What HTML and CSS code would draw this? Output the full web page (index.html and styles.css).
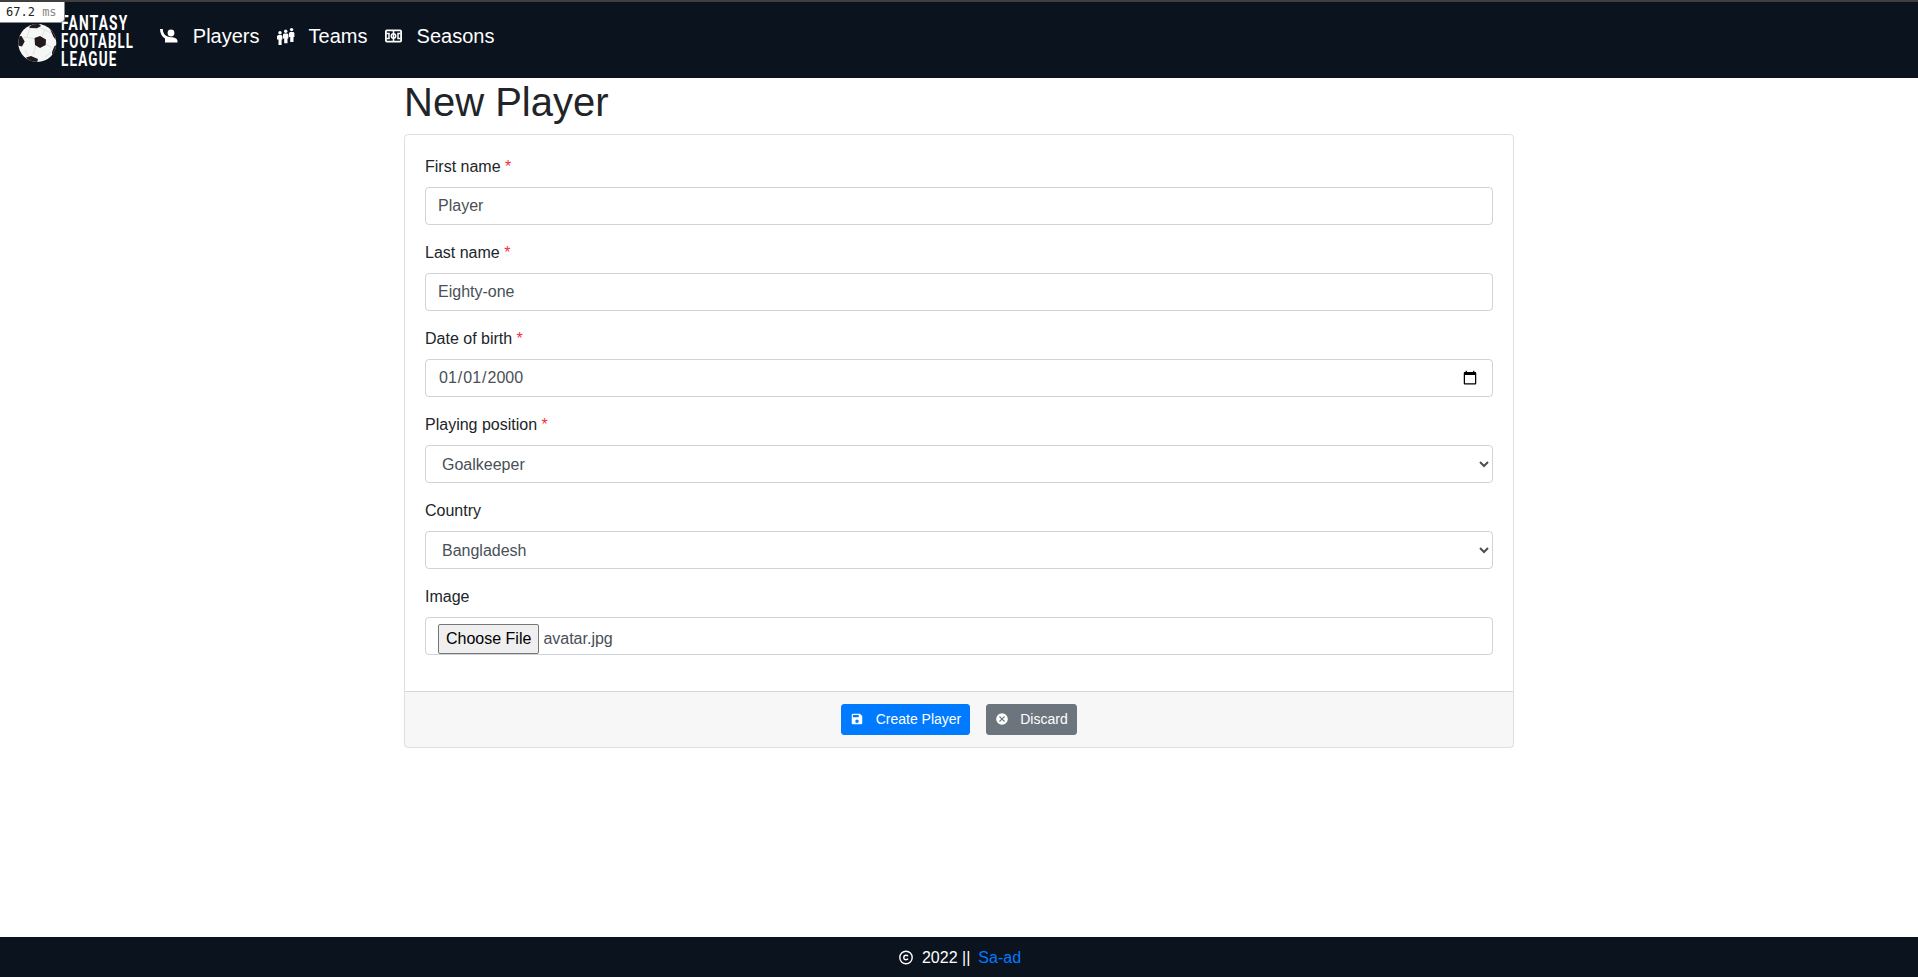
FILE: index.html
```html
<!DOCTYPE html>
<html lang="en-US">
<head>
<meta charset="utf-8">
<title>New Player</title>
<link rel="stylesheet" href="styles.css">
</head>
<body>
<div class="profiler">67.2 <span>ms</span></div>
<header class="navbar">
  <svg class="brand" width="120" height="60" viewBox="15 10 120 60">
    <defs><clipPath id="ball"><circle cx="37.3" cy="43" r="19"/></clipPath></defs>
    <circle cx="37.3" cy="43" r="19" fill="#f5f7f6"/>
    <g clip-path="url(#ball)">
      <g stroke="#dde0df" stroke-width="1" fill="none">
        <path d="M36 46l-3 9M46 44l6 4M42 36l3-6M34 39l-7-2M27 37l-4 1M27 37l3-9M45 30l-6-3M45 30l6 3M25 50l3 6M45 57l6-5"/>
      </g>
      <path fill="#211c1b" d="M34.500 38l5.500-2 6 3.500-.3 5.500-5.700 3-5-3zM29 27l4-3h6l2 2-4 2.300-7-.3zM18 36h3.500l3.200 5.500-2.700 5-4-1zM50 29l5 4 2 8-3.500-4zM26 57.500l5-1.500 7 3-1 4-8-1.500zM52 52l2.500-6 2.500-1-1 6-4 5z"/>
    </g>
    <g class="wordmark">
      <text x="61" y="29.700" textLength="67.500" lengthAdjust="spacingAndGlyphs">FANTASY</text>
      <text x="61" y="48" textLength="73" lengthAdjust="spacingAndGlyphs">FOOTABLL</text>
      <text x="61" y="66.200" textLength="56.500" lengthAdjust="spacingAndGlyphs">LEAGUE</text>
    </g>
  </svg>
  <nav class="links">
    <a class="nav-link"><svg width="20" height="20" viewBox="0 0 20 20"><circle cx="12" cy="6" r="3.400"/><path d="M1 2h2.800c0 4 2 6.500 5 7.600 1.200.4 2.200.6 3.200.6 3.500 0 6.500 1.500 6.500 3.800v1.500H6v-4C3 9.800 1 6.300 1 2z"/></svg>Players</a>
    <a class="nav-link"><svg width="20" height="20" viewBox="-1 0 20 20"><circle cx="4" cy="5.700" r="1.700"/><circle cx="9.700" cy="4.300" r="1.700"/><circle cx="15.600" cy="2.600" r="1.700"/><path d="M2.200 8h3.200l1 1v3.500H5.600V18H2.500v-5.500H1V9zM8 6.600h3.400l1 1v4h-.9v4.700H8.200v-4.700H7V7.600zM14 4.900h3.400l1 1v4h-.9v5h-3.300v-5H13v-4z"/></svg>Teams</a>
    <a class="nav-link"><svg width="20" height="20" viewBox="-1 0 20 20"><g fill="none" stroke="#fff"><rect x="1.900" y="3.400" width="15.200" height="11.200" rx="1" stroke-width="1.800"/><path stroke-width="1.500" d="M2.500 6.500H5v5H2.500M16.500 6.500H14v5h2.500M9.500 3.500v11"/><circle cx="9.500" cy="9" r="2.200" stroke-width="1.500"/></g></svg>Seasons</a>
  </nav>
</header>
<main class="container">
  <h1>New Player</h1>
  <form class="card">
    <div class="card-body">
      <div class="group"><label>First name <abbr>*</abbr></label><input class="control" type="text" value="Player"></div>
      <div class="group"><label>Last name <abbr>*</abbr></label><input class="control" type="text" value="Eighty-one"></div>
      <div class="group"><label>Date of birth <abbr>*</abbr></label><input class="control" type="date" value="2000-01-01"></div>
      <div class="group"><label>Playing position <abbr>*</abbr></label><select class="control"><option>Goalkeeper</option></select></div>
      <div class="group"><label>Country</label><select class="control"><option>Bangladesh</option></select></div>
      <div class="group"><label>Image</label><div class="control file"><button type="button" class="choose">Choose File</button><span>avatar.jpg</span></div></div>
    </div>
    <div class="card-footer">
      <button type="button" class="btn primary"><svg width="14" height="14" viewBox="0 0 24 24"><path fill-rule="evenodd" d="M17 3H5a2 2 0 0 0-2 2v14a2 2 0 0 0 2 2h14a2 2 0 0 0 2-2V7zM12 19a3 3 0 1 1 0-6 3 3 0 0 1 0 6zM15 9H5V5h10z"/></svg>Create Player</button>
      <button type="button" class="btn secondary"><svg width="14" height="14" viewBox="0 0 24 24"><path d="M12 2a10 10 0 1 0 0 20 10 10 0 0 0 0-20zm5 13.600L15.600 17 12 13.400 8.400 17 7 15.600 10.600 12 7 8.400 8.400 7l3.600 3.600L15.600 7 17 8.400 13.400 12z"/></svg>Discard</button>
    </div>
  </form>
</main>
<footer class="footer">
  <svg width="16" height="16" viewBox="0 0 16 16" fill="none" stroke="#fff"><circle cx="8" cy="7.500" r="6.200" stroke-width="1.400"/><path stroke-width="1.400" d="M10 6.300C9.600 5.500 8.900 5.200 8 5.200c-1.300 0-2.200 1-2.200 2.300s.9 2.300 2.200 2.300c.9 0 1.600-.4 2-1.100"/></svg>
  <span>2022 ||</span><a>Sa-ad</a>
</footer>
</body>
</html>
```
FILE: styles.css
```css
*, *::before, *::after { box-sizing: border-box; }
body {
  margin: 0;
  min-height: 977px;
  display: flex;
  flex-direction: column;
  background: #fff;
  border-top: 2px solid #3f3f41;
  color: #212529;
  font: 16px/1.5 "Liberation Sans", Arial, sans-serif;
}
.profiler {
  position: absolute;
  top: 2px;
  left: 0;
  width: 65px;
  height: 21px;
  padding-left: 6px;
  background: #fff;
  border-right: 1px solid #888;
  border-bottom: 1px solid #888;
  border-bottom-right-radius: 5px;
  color: #222;
  font: 12px/20px "DejaVu Sans Mono", monospace;
  white-space: nowrap;
}
.profiler span { color: #888; }
.navbar {
  height: 76px;
  display: flex;
  align-items: flex-start;
  padding: 8px 15px;
  background: #0b131e;
}
.brand { flex: none; overflow: visible; }
.wordmark { fill: #fff; font: bold 20.5px Roboto, "Liberation Sans", sans-serif; letter-spacing: 1.8px; }
.links { display: flex; gap: 15.300px; padding-left: 24px; margin-top: 11px; }
.nav-link { display: flex; align-items: center; gap: 13.800px; color: #fff; font-size: 20px; line-height: 30px; }
.nav-link svg { fill: #fff; margin-top: 1px; }
.container { width: 1110px; margin: 0 auto; flex: 1; }
h1 { margin: 0 0 8px; font-size: 40px; font-weight: 500; line-height: 48px; }
.card { margin: 0; border: 1px solid rgba(0, 0, 0, .125); border-radius: 4px; }
.card-body { padding: 20px; }
.group { margin-bottom: 16px; }
label { display: block; margin-bottom: 8px; }
abbr { color: #f02f3c; }
.control {
  display: block;
  width: 100%;
  height: 38px;
  padding: 6px 12px;
  color: #495057;
  background: #fff;
  border: 1px solid #ced4da;
  border-radius: 4px;
  font: 16px/1.5 "Liberation Sans", Arial, sans-serif;
}
.control::-webkit-calendar-picker-indicator { opacity: 1; }
.file { display: flex; align-items: flex-start; gap: 4px; line-height: 30px; }
.choose {
  height: 30px;
  padding: 1px 7px;
  color: #000;
  background: #efefef;
  border: 1px solid #767676;
  border-radius: 2px;
  font: inherit;
  line-height: 26px;
}
.card-footer {
  display: flex;
  justify-content: center;
  gap: 16px;
  padding: 12px 20px;
  background: rgba(0, 0, 0, .03);
  border-top: 1px solid rgba(0, 0, 0, .125);
}
.btn {
  display: flex;
  align-items: center;
  gap: 11.400px;
  height: 31px;
  padding: 4px 7.800px;
  border: 1px solid transparent;
  border-radius: 3px;
  color: #fff;
  font: 14px/21px "Liberation Sans", Arial, sans-serif;
}
.btn svg { fill: #fff; margin-top: -2px; }
.primary { background: #007bff; border-color: #007bff; }
.secondary { background: #6c757d; border-color: #6c757d; }
.footer {
  height: 40px;
  display: flex;
  align-items: center;
  justify-content: center;
  gap: 8px;
  padding: 2px 0 0 1px;
  color: #fff;
  background: #0b131e;
}
.footer a { color: #007bff; }
```
